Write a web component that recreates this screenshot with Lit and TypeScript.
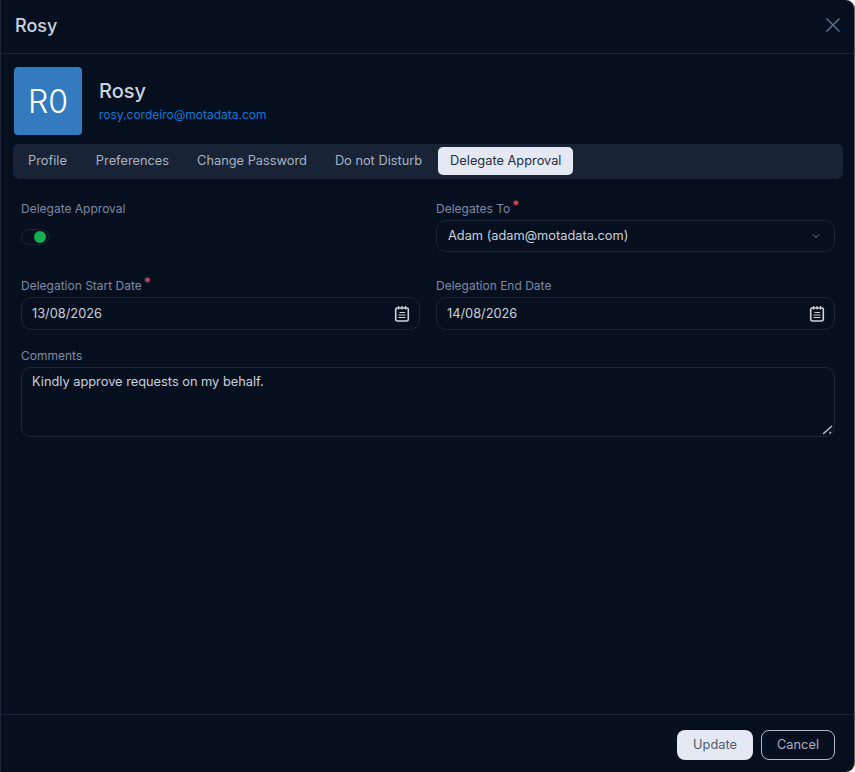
import { LitElement, html, css, svg } from 'lit';
import { customElement } from 'lit/decorators.js';

const tabs = ['Profile', 'Preferences', 'Change Password', 'Do not Disturb', 'Delegate Approval'];

const calendarIcon = svg`
  <path d="M3 3h10a1.3 1.3 0 0 1 1.3 1.3v9.7a2 2 0 0 1-2 2H3.7a2 2 0 0 1-2-2V4.3A1.3 1.3 0 0 1 3 3Z" fill="none" stroke="currentColor" stroke-width="1.6"/>
  <path d="M4.5 1v3.5M8 1v3.5M11.5 1v3.5" fill="none" stroke="currentColor" stroke-width="1.2"/>
  <path d="M5.5 7.5h5.5M4.5 10h7M4.5 12.5h7" fill="none" stroke="currentColor" stroke-width="1.2"/>
`;

@customElement('app-root')
export class AppRoot extends LitElement {
  static styles = css`
    :host {
      display: block;
      height: 772px;
      background: #ffffff;
      font-family: Inter, 'Noto Sans', sans-serif;
    }

    .dialog {
      box-sizing: border-box;
      height: 772px;
      display: flex;
      flex-direction: column;
      background: #060f1e;
      border-left: 1px solid #1a2638;
      border-right: 1px solid #5a6270;
      border-radius: 0 9px 9px 0;
    }

    .head {
      box-sizing: border-box;
      height: 54px;
      flex: none;
      display: flex;
      align-items: center;
      justify-content: space-between;
      padding: 0 13px 3px 14px;
      border-bottom: 1px solid #1a2638;
    }

    .title {
      font-size: 18px;
      font-weight: 500;
      color: #cdd3de;
    }

    .close {
      width: 16px;
      height: 16px;
      color: #5f7797;
    }

    .body {
      flex: 1;
      padding: 13px 11px 0 12px;
    }

    .user {
      display: flex;
      align-items: center;
      gap: 17px;
      padding-left: 1px;
    }

    .avatar {
      width: 68px;
      height: 68px;
      border-radius: 4px;
      background: #337abf;
      color: #ffffff;
      font-size: 32px;
      font-weight: 300;
      display: flex;
      align-items: center;
      justify-content: center;
    }

    .name {
      font-size: 20px;
      font-weight: 500;
      line-height: 24px;
      margin-top: 1px;
      color: #cdd3de;
    }

    .email {
      font-size: 12px;
      line-height: 20px;
      margin-top: 2px;
      color: #0b78d8;
    }

    .tabs {
      box-sizing: border-box;
      display: flex;
      align-items: flex-start;
      height: 35px;
      margin-top: 9px;
      padding: 3px 3px 0;
      background: #182335;
      border-radius: 6px;
    }

    .tab {
      padding: 0 12px;
      height: 28px;
      line-height: 28px;
      margin-right: 4px;
      border-radius: 5px;
      font-size: 12.8px;
      color: #a8b3c4;
    }

    .tab:first-child { margin-right: 5px; }

    .tab.active {
      background: #e4e8f2;
      color: #1f2b40;
    }

    .form {
      display: grid;
      grid-template-columns: 1fr 1fr;
      column-gap: 16px;
      padding: 20px 8px 0 8px;
    }

    .field {
      display: flex;
      flex-direction: column;
    }

    .label {
      font-size: 12px;
      line-height: 20px;
      color: #7c8ba6;
      height: 20px;
    }

    .req {
      color: #f05a60;
      font-size: 14px;
      line-height: 14px;
      position: relative;
      top: -2px;
      margin-left: 2px;
    }

    .control {
      box-sizing: border-box;
      height: 33px;
      display: flex;
      align-items: center;
      justify-content: space-between;
      padding: 0 10px 1px;
      border: 1px solid #1a2638;
      border-radius: 10px;
      font-size: 12.8px;
      color: #cbd1dc;
    }

    .row-1 { height: 77px; }
    .row-2 { height: 70px; }
    .row-2 .control { margin-top: 1px; }

    .select { height: 32px; margin-top: 1px; padding-left: 11px; }

    .chevron { width: 8px; height: 8px; color: #75849c; margin-right: 4px; }
    .calendar { width: 16px; height: 17px; color: #d0d5de; margin-right: -1px; }

    .toggle {
      box-sizing: border-box;
      width: 28px;
      height: 16px;
      margin-top: 10px;
      border: 1px solid #1a2638;
      border-radius: 8px;
      display: flex;
      align-items: center;
      justify-content: flex-end;
      padding-right: 2px;
    }

    .knob {
      width: 12px;
      height: 12px;
      border-radius: 50%;
      background: #12b04e;
    }

    .comments { grid-column: 1 / 3; }

    .textarea {
      box-sizing: border-box;
      position: relative;
      height: 70px;
      margin-top: 1px;
      padding: 5px 10px;
      border: 1px solid #1a2638;
      border-radius: 10px;
      font-size: 12.8px;
      line-height: 18px;
      color: #cbd1dc;
    }

    .grip {
      position: absolute;
      right: 0;
      bottom: 0;
      width: 11px;
      height: 11px;
      color: #b5b9c0;
    }

    .foot {
      box-sizing: border-box;
      height: 58px;
      flex: none;
      display: flex;
      align-items: flex-start;
      justify-content: flex-end;
      gap: 8px;
      padding: 15px 19px 0 0;
      border-top: 1px solid #1a2638;
    }

    .btn {
      box-sizing: border-box;
      height: 30px;
      padding: 0 15px 1px;
      display: flex;
      align-items: center;
      border-radius: 8px;
      font-size: 12.8px;
      color: #a8b3c4;
    }

    .btn.primary {
      width: 76px;
      justify-content: center;
      background: #e4e8f2;
      color: #4f5c73;
    }

    .btn.outline {
      width: 74px;
      justify-content: center;
      border: 1px solid #b3bac6;
    }
  `;

  private calendar() {
    return html`<svg class="calendar" viewBox="0 0 16 17">${calendarIcon}</svg>`;
  }

  render() {
    return html`
      <div class="dialog">
        <header class="head">
          <div class="title">Rosy</div>
          <svg class="close" viewBox="0 0 16 16">
            <path d="M1.5 1.5l13 13M14.5 1.5l-13 13" fill="none" stroke="currentColor" stroke-width="1.4"/>
          </svg>
        </header>

        <div class="body">
          <div class="user">
            <div class="avatar">R0</div>
            <div>
              <div class="name">Rosy</div>
              <div class="email">rosy.cordeiro@motadata.com</div>
            </div>
          </div>

          <nav class="tabs">
            ${tabs.map(
              (t) => html`<div class="tab ${t === 'Delegate Approval' ? 'active' : ''}">${t}</div>`
            )}
          </nav>

          <div class="form">
            <div class="field row-1">
              <div class="label">Delegate Approval</div>
              <div class="toggle"><div class="knob"></div></div>
            </div>
            <div class="field row-1">
              <div class="label">Delegates To<span class="req">*</span></div>
              <div class="control select">
                <span>Adam (adam@motadata.com)</span>
                <svg class="chevron" viewBox="0 0 8 8">
                  <path d="M1 2.5l3 3 3-3" fill="none" stroke="currentColor" stroke-width="1"/>
                </svg>
              </div>
            </div>

            <div class="field row-2">
              <div class="label">Delegation Start Date<span class="req">*</span></div>
              <div class="control"><span>13/08/2026</span>${this.calendar()}</div>
            </div>
            <div class="field row-2">
              <div class="label">Delegation End Date</div>
              <div class="control"><span>14/08/2026</span>${this.calendar()}</div>
            </div>

            <div class="field comments">
              <div class="label">Comments</div>
              <div class="textarea">
                Kindly approve requests on my behalf.
                <svg class="grip" viewBox="0 0 11 11">
                  <path d="M0 9l9-8M6.5 8.5L8 7" fill="none" stroke="currentColor" stroke-width="1.6"/>
                </svg>
              </div>
            </div>
          </div>
        </div>

        <footer class="foot">
          <div class="btn primary">Update</div>
          <div class="btn outline">Cancel</div>
        </footer>
      </div>
    `;
  }
}
